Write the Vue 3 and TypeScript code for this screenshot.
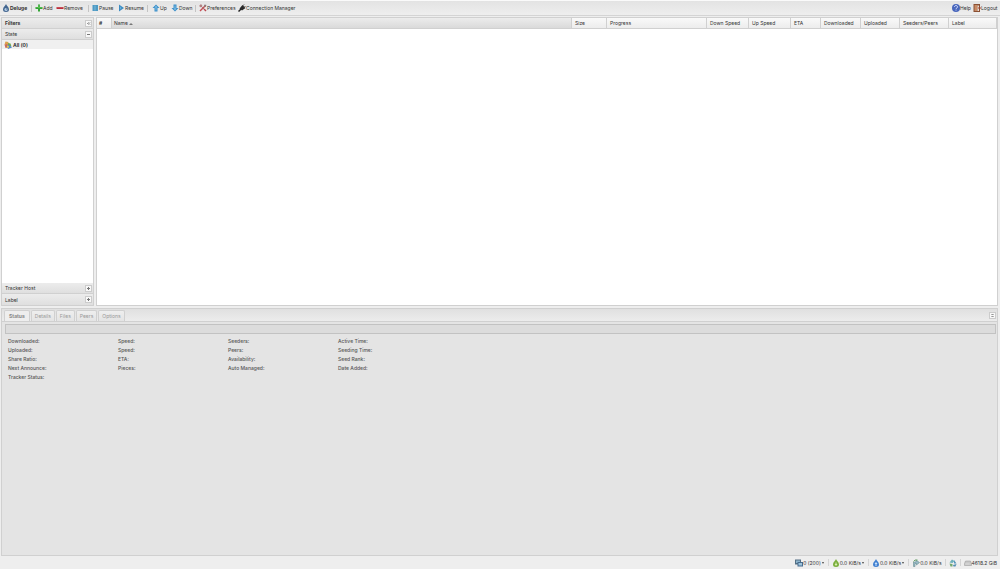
<script setup lang="ts">
import { ref } from 'vue'

interface Column { label: string; width: string; cls?: string }

const columns: Column[] = [
  { label: '#', width: '15px', cls: 'num' },
  { label: 'Name', width: 'auto', cls: 'sorted' },
  { label: 'Size', width: '35px' },
  { label: 'Progress', width: '100px' },
  { label: 'Down Speed', width: '42px' },
  { label: 'Up Speed', width: '42px' },
  { label: 'ETA', width: '30px' },
  { label: 'Downloaded', width: '40px' },
  { label: 'Uploaded', width: '39px' },
  { label: 'Seeders/Peers', width: '49px' },
  { label: 'Label', width: '48px' },
]

const tabs = ['Status', 'Details', 'Files', 'Peers', 'Options']
const activeTab = ref('Status')

const details: string[][] = [
  ['Downloaded:', 'Uploaded:', 'Share Ratio:', 'Next Announce:', 'Tracker Status:'],
  ['Speed:', 'Speed:', 'ETA:', 'Pieces:'],
  ['Seeders:', 'Peers:', 'Availability:', 'Auto Managed:'],
  ['Active Time:', 'Seeding Time:', 'Seed Rank:', 'Date Added:'],
]
</script>

<template>
  <div class="app">
    <nav class="toolbar">
      <button class="brand">
        <svg viewBox="0 0 16 16"><path d="M8 0C7 4 2 6 2 11a6 5 0 0 0 12 0C14 6 9 4 8 0z" fill="#42658f" /><path d="M5 10c1-3 5-3 6 0s-1 4-3 4-4-2-3-4z" fill="#b5cde5" /><path d="M8 9c2 0 2 2 1 3" stroke="#27476e" fill="none" /></svg>Deluge
      </button>
      <i class="sep"></i>
      <button class="add"><svg viewBox="0 0 16 16"><path d="M6 1h4v5h5v4h-5v5H6v-5H1V6h5z" fill="#35a537" /><path d="M7 2h2v5h5v1H2V7h5z" fill="#6cc760" /></svg>Add</button>
      <button class="remove"><svg viewBox="0 0 16 16"><rect x="1" y="6" width="14" height="4" rx="1" fill="#b92e3c" /><path d="M2 7h12" stroke="#d96d75" /></svg>Remove</button>
      <i class="sep"></i>
      <button class="pause"><svg viewBox="0 0 16 16"><path d="M3 2h11v12H3z" fill="#4d9ac4" /><path d="M8 3v10" stroke="#7ab9da" stroke-width="2" /></svg>Pause</button>
      <button class="resume"><svg viewBox="0 0 16 16"><path d="M4 1l10 7-10 7z" fill="#3d8cc2" /><path d="M6 5l3 3-3 3z" fill="#6db3dc" /></svg>Resume</button>
      <i class="sep"></i>
      <button class="up"><svg viewBox="0 0 16 16"><path d="M8 1l7 7h-4v7H5V8H1z" fill="#3c8fc9" /><path d="M8 3l3 4H9v6H7V7H5z" fill="#7cbde4" /></svg>Up</button>
      <button class="down"><svg viewBox="0 0 16 16"><path d="M8 15l7-7h-4V1H5v7H1z" fill="#3c8fc9" /><path d="M8 13l3-4H9V3H7v6H5z" fill="#7cbde4" /></svg>Down</button>
      <i class="sep"></i>
      <button class="prefs"><svg viewBox="0 0 16 16"><path d="M3 3l10 10" stroke="#999" stroke-width="2" /><path d="M2 14L13 3" stroke="#c54e54" stroke-width="3" /><path d="M0 4l4-4 3 4-3 3z" fill="#b27f7f" /><path d="M11 1l4 1-2 4-3-1z" fill="#8b7777" /><path d="M10 10l4 4" stroke="#b94850" stroke-width="3" /></svg>Preferences</button>
      <button class="manager"><svg viewBox="0 0 16 16"><path d="M1 15l5-5" stroke="#222" stroke-width="3" /><path d="M3 9l6-7 6 6-7 5z" fill="#292929" /><path d="M9 4l3-3M12 7l3-3" stroke="#555" stroke-width="2" /></svg>Connection Manager</button>
      <span class="grow"></span>
      <button class="help"><svg viewBox="0 0 16 16"><circle cx="8" cy="8" r="8" fill="#4967bd" /><path d="M5 6c0-4 6-4 6 0 0 2-3 2-3 4" stroke="#dce4ff" stroke-width="2" fill="none" /><circle cx="8" cy="12" r="1" fill="#fff" /></svg>Help</button>
      <button class="logout"><svg viewBox="0 0 16 16"><path d="M1 0h13v16H1z" fill="#8a5034" /><path d="M3 2h6v12H3z" fill="#c98b64" /><path d="M9 3h3v11H9z" fill="#e5dcd5" /><path d="M10 8h6" stroke="#a43f2e" stroke-width="2" /></svg>Logout</button>
    </nav>

    <main class="upper">
      <aside class="sidebar">
        <h2 class="bar title">Filters<button class="tool" aria-label="Collapse filters"><svg viewBox="0 0 10 10"><path d="M5 3L3 5l2 2M8 3L6 5l2 2" /></svg></button></h2>
        <h3 class="bar">State<button class="tool" aria-label="Collapse state"><svg viewBox="0 0 10 10"><path d="M2 5h6" /></svg></button></h3>
        <div class="filters">
          <button class="filter">
            <svg viewBox="0 0 16 16"><path d="M3 1l6 1-1 6-7-1z" fill="#dca04b" /><path d="M1 7l6-1 1 7-5 1z" fill="#cf6a55" /><path d="M8 4l5 1 2 6-7-1z" fill="#6bab52" /><path d="M5 9l6-1 5 5-8 3z" fill="#5689c6" /><path d="M6 9l4 1-1 4-3-1z" fill="#e3c84c" /></svg>All (0)
          </button>
        </div>
        <h3 class="bar">Tracker Host<button class="tool" aria-label="Expand tracker host"><svg viewBox="0 0 10 10"><path d="M2 5h6M5 2v6" /></svg></button></h3>
        <h3 class="bar">Label<button class="tool" aria-label="Expand label"><svg viewBox="0 0 10 10"><path d="M2 5h6M5 2v6" /></svg></button></h3>
      </aside>
      <section class="torrents">
        <table>
          <colgroup><col v-for="c in columns" :key="c.label" :style="{ width: c.width }" /></colgroup>
          <thead>
            <tr>
              <th v-for="c in columns" :key="c.label" :class="c.cls" scope="col">{{ c.label }}<svg v-if="c.cls === 'sorted'" viewBox="0 0 4 2"><path d="M0 2l2-2 2 2z" fill="#777" /></svg></th>
            </tr>
          </thead>
        </table>
      </section>
    </main>

    <section class="lower">
      <div class="tabs" role="tablist">
        <button v-for="t in tabs" :key="t" role="tab" :aria-selected="activeTab === t" :class="{ active: activeTab === t }" @click="activeTab = t">{{ t }}</button>
        <span class="grow"></span>
        <button class="tool" aria-label="Collapse details"><svg viewBox="0 0 10 10"><path d="M3 2l2 2 2-2M3 6l2 2 2-2" /></svg></button>
      </div>
      <div class="progress" role="progressbar" aria-label="Progress"></div>
      <div class="details">
        <dl v-for="(group, i) in details" :key="i"><dt v-for="(d, j) in group" :key="j">{{ d }}</dt></dl>
      </div>
    </section>

    <footer class="status">
      <button class="conns"><svg viewBox="0 0 16 16"><rect x="0" y="1" width="12" height="10" fill="#546f83" /><path d="M2 3h8v5H2z" fill="#8db4cc" /><rect x="5" y="6" width="11" height="9" fill="#466a8d" /><path d="M7 8h7v5H7z" fill="#9cc4dd" /></svg>0 (200)<b class="caret"></b></button>
      <i class="sep"></i>
      <button class="rate"><svg viewBox="0 0 16 16"><path d="M8 0C7 4 2 6 2 11a6 5 0 0 0 12 0C14 6 9 4 8 0z" fill="#79ae3b" /><path d="M7 7h2v3h2l-3 4-3-4h2z" fill="#dcf0b8" /></svg>0.0 KiB/s<b class="caret"></b></button>
      <i class="sep"></i>
      <button class="rate"><svg viewBox="0 0 16 16"><path d="M8 0C7 4 2 6 2 11a6 5 0 0 0 12 0C14 6 9 4 8 0z" fill="#3f7fd0" /><path d="M7 14h2v-4h2L8 6l-3 4h2z" fill="#cfe4fb" /></svg>0.0 KiB/s<b class="caret"></b></button>
      <i class="sep"></i>
      <span class="traffic"><svg viewBox="0 0 16 16"><path d="M3 15V6h5V2l7 5-6 5V9H6v6z" fill="#9bbbc7" stroke="#527e82" /><path d="M3 5l3-3h5" stroke="#6ca36a" stroke-width="2" fill="none" /></svg>0.0 KiB/s</span>
      <i class="sep"></i>
      <span class="dht"><svg viewBox="0 0 16 16"><path d="M1 7l5-6 5 3-4 4z" fill="#6dafbb" /><path d="M10 2l5 7h-5z" fill="#5695bb" /><path d="M1 9l6 1v5H3z" fill="#75aa70" /><path d="M8 12l7-2-2 5H9z" fill="#558fb5" /></svg></span>
      <i class="sep"></i>
      <span class="space"><svg viewBox="0 0 16 16"><path d="M3 4h10l2 5v4H1V9z" fill="#c8c8c8" stroke="#929292" /><path d="M3 10h8" stroke="#eee" /></svg>4618.2 GiB</span>
    </footer>
  </div>
</template>

<style>
body { margin: 0; }
</style>

<style scoped>
.app {
  box-sizing: border-box;
  height: 100vh;
  display: flex;
  flex-direction: column;
  overflow: hidden;
  background: #eee;
  color: #333;
  font: 5px/8px Inter, "Liberation Sans", Arial, sans-serif;
}
.app * { box-sizing: border-box; }
button {
  font: inherit;
  color: inherit;
  border: 0;
  padding: 0;
  margin: 0;
  background: none;
  display: flex;
  align-items: center;
  white-space: nowrap;
}
svg { display: block; flex: none; }
.grow { flex: 1; }
.sep { width: 1px; height: 7px; background: #c4c4c4; flex: none; }

.toolbar {
  height: 16px;
  flex: none;
  display: flex;
  align-items: center;
  padding: 0 2px;
  border-top: 1px solid #fafafa;
  border-bottom: 1px solid #d4d4d4;
  background: linear-gradient(#e3e3e3, #eee);
}
.toolbar svg { width: 8px; height: 8px; }
.brand { width: 29px; font-weight: 700; }
.brand + .sep { margin-right: 3px; }
.add { width: 21px; }
.remove { width: 32px; }
.pause { width: 26px; margin-left: 2px; }
.resume { width: 30px; }
.up { width: 19px; margin-left: 4px; }
.down { width: 24px; }
.prefs { width: 39px; margin-left: 3px; }
.help { width: 21px; }
.logout { width: 25px; }

.upper {
  flex: 1;
  min-height: 0;
  display: flex;
  gap: 2px;
  padding: 1px 2px 0 1px;
}
.sidebar {
  width: 93px;
  flex: none;
  display: flex;
  flex-direction: column;
  border: 1px solid #d0d0d0;
  background: #fff;
}
.bar {
  margin: 0;
  height: 11px;
  flex: none;
  display: flex;
  align-items: center;
  justify-content: space-between;
  padding: 0 1px 0 3px;
  font: inherit;
  border-bottom: 1px solid #d0d0d0;
  background: linear-gradient(#ececec, #dfdfdf);
}
.bar:last-child { border-bottom: 0; }
.title { font-weight: 700; }
.tool {
  width: 7px;
  height: 7px;
  background: #f8f8f8;
  border: 1px solid #ccc;
}
.tool svg { width: 5px; height: 5px; fill: none; stroke: #777; stroke-width: 2; }
.filters { flex: 1; }
.filter {
  width: 100%;
  height: 9px;
  padding-left: 2px;
  background: #f0f0f0;
  font-weight: 700;
}
.filter svg { width: 8px; height: 8px; margin-right: 1px; }
.torrents {
  flex: 1;
  min-width: 0;
  background: #fff;
  border: 1px solid #d0d0d0;
}
table {
  width: 100%;
  table-layout: fixed;
  border-collapse: separate;
  border-spacing: 0;
}
thead { background: linear-gradient(#f9f9f9, #ebebeb); }
th {
  height: 11px;
  padding: 0 3px;
  border-right: 1px solid #d0d0d0;
  border-bottom: 1px solid #d0d0d0;
  font-weight: 400;
  line-height: 8px;
  text-align: left;
  white-space: nowrap;
}
.num { font-weight: 700; padding: 0 2px; }
.sorted { padding: 0 2px; background: linear-gradient(#ececec, #dadada); }
.sorted svg { display: inline-block; width: 4px; height: 2px; margin-left: 1px; vertical-align: middle; }

.lower {
  flex: 0 0 248px;
  min-height: 0;
  margin: 2px 2px 0 1px;
  border: 1px solid #d0d0d0;
  background: #e4e4e4;
}
.tabs {
  height: 13px;
  display: flex;
  align-items: flex-end;
  gap: 1px;
  padding: 0 1px 0 2px;
  border-bottom: 1px solid #d0d0d0;
  background: linear-gradient(#e0e0e0, #ececec);
  color: #999;
}
.tabs [role="tab"] {
  height: 11px;
  padding: 0 3px;
  border: 1px solid #d0d0d0;
  border-bottom: 0;
  border-radius: 2px 2px 0 0;
  background: linear-gradient(#eee, #e4e4e4);
}
.tabs .active[role="tab"] { padding: 0 4px; font-weight: 700; background: #eee; color: #888; }
.tabs .tool { align-self: center; }
.progress {
  height: 10px;
  margin: 2px 1px 0 3px;
  border: 1px solid #c2c2c2;
  background: #dcdcdc;
}
.details { display: flex; padding: 3px 6px; color: #555; }
dl { width: 110px; margin: 0; }
dt { line-height: 9px; font-weight: 500; }

.status {
  height: 13px;
  flex: none;
  display: flex;
  align-items: center;
  justify-content: flex-end;
  padding: 0 3px;
  gap: 3px;
  background: #eee;
  white-space: nowrap;
}
.status svg { width: 8px; height: 8px; }
.status span { display: flex; align-items: center; }
.status .sep { background: #d4d4d4; }
.caret {
  margin: 0 1px;
  border: 1px solid transparent;
  border-top: 2px solid #444;
  border-bottom: 0;
}
</style>
